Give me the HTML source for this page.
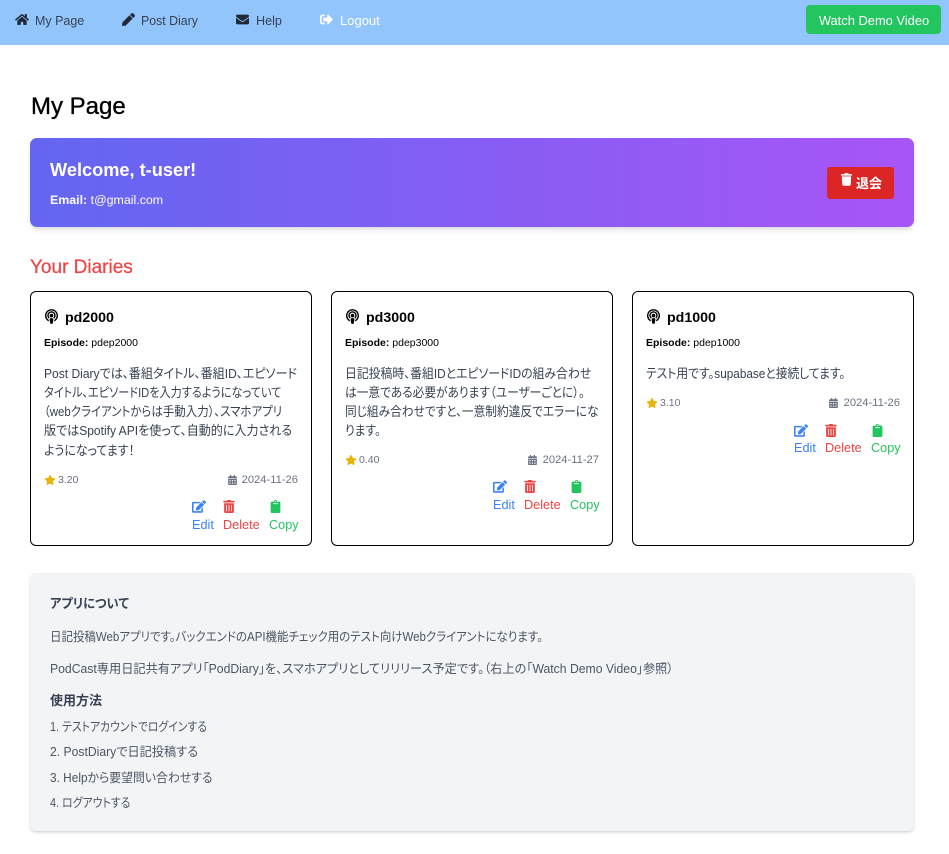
<!DOCTYPE html>
<html lang="ja"><head><meta charset="utf-8"><title>My Page</title>
<style>
*{box-sizing:border-box}
html,body{margin:0;padding:0;background:#fff;width:949px;height:854px;overflow:hidden}
body{position:relative;font-family:"Liberation Sans","Noto Sans CJK JP",sans-serif;font-feature-settings:"palt";color:#374151}
.t{position:absolute;white-space:nowrap;line-height:20px;height:20px;margin:0;font-weight:400;transform-origin:0 50%}
.c{transform:translateX(-50%)}
.r{transform:translateX(-100%)}
svg{position:absolute;display:block;fill:currentColor}
.box{position:absolute}
.card{position:absolute;top:291px;width:282px;height:255px;border:1px solid #000;border-radius:6px;background:#fff}
.ttl{font-size:14.2px;font-weight:700;color:#000}
.ep{font-size:10.5px;color:#000}
.body{font-size:13px;color:#374151}
.rate{font-size:10.5px;color:#6b7280}
.date{font-size:11.2px;color:#6b7280}
.lb{font-size:12.7px}
.nav{font-size:13px;color:#374151}
.ab{font-size:12.5px;color:#4b5563}
.abb{font-size:13px;font-weight:700;color:#374151}
</style></head><body>
<svg width="0" height="0" style="position:absolute">
<symbol id="i-pod" viewBox="0 0 448 512"><path d="M267.429 488.563C262.286 507.573 242.858 512 224 512c-18.857 0-38.286-4.427-43.428-23.437C172.927 460.134 160 388.898 160 355.75c0-35.156 31.142-43.75 64-43.75s64 8.594 64 43.75c0 32.949-12.871 104.179-20.571 132.813zM156.867 288.554c-18.693-18.308-29.958-44.173-28.784-72.599 2.054-49.724 42.395-89.956 92.124-91.881C274.862 121.958 320 165.807 320 220c0 26.827-11.064 51.116-28.866 68.552-2.675 2.62-2.401 6.986.628 9.187 9.312 6.765 16.46 15.343 21.234 25.363 1.741 3.654 6.497 4.66 9.449 1.891 28.826-27.043 46.553-65.783 45.511-108.565-1.855-76.206-63.595-138.208-139.793-140.369C146.869 73.753 80 139.215 80 220c0 41.361 17.532 78.7 45.55 104.989 2.953 2.771 7.711 1.77 9.453-1.887 4.774-10.021 11.923-18.598 21.235-25.363 3.029-2.2 3.304-6.566.629-9.185zM224 0C100.204 0 0 100.185 0 224c0 89.992 52.602 165.647 125.739 201.408 4.333 2.118 9.267-1.544 8.535-6.31-2.382-15.512-4.342-30.946-5.406-44.339-.146-1.836-1.149-3.486-2.678-4.512-47.4-31.806-78.564-86.016-78.187-147.347.592-96.237 79.29-174.648 175.529-174.899C320.793 47.747 400 126.797 400 224c0 61.932-32.158 116.49-80.65 147.867-.999 14.037-3.069 30.588-5.624 46.23-.731 4.767 4.203 8.429 8.535 6.31C395.227 389.727 448 314.187 448 224 448 100.205 347.815 0 224 0zM224 160c-35.346 0-64 28.654-64 64s28.654 64 64 64 64-28.654 64-64-28.654-64-64-64z"/></symbol>
<symbol id="i-star" viewBox="0 0 576 512"><path d="M259.3 17.8L194 150.2 47.9 171.5c-26.2 3.8-36.7 36.1-17.7 54.6l105.7 103-25 145.5c-4.5 26.3 23.2 46 46.4 33.7L288 439.6l130.7 68.7c23.2 12.2 50.9-7.4 46.4-33.7l-25-145.5 105.7-103c19-18.5 8.5-50.8-17.7-54.6L382 150.2 316.7 17.8c-11.7-23.6-45.6-23.9-57.4 0z"/></symbol>
<symbol id="i-cal" viewBox="0 0 448 512"><path d="M0 464c0 26.5 21.5 48 48 48h352c26.5 0 48-21.5 48-48V192H0v272zm320-196c0-6.6 5.4-12 12-12h40c6.6 0 12 5.4 12 12v40c0 6.6-5.4 12-12 12h-40c-6.6 0-12-5.4-12-12v-40zm0 128c0-6.6 5.4-12 12-12h40c6.6 0 12 5.4 12 12v40c0 6.6-5.4 12-12 12h-40c-6.6 0-12-5.4-12-12v-40zM192 268c0-6.6 5.4-12 12-12h40c6.6 0 12 5.4 12 12v40c0 6.6-5.4 12-12 12h-40c-6.6 0-12-5.4-12-12v-40zm0 128c0-6.6 5.4-12 12-12h40c6.6 0 12 5.4 12 12v40c0 6.6-5.4 12-12 12h-40c-6.6 0-12-5.4-12-12v-40zM64 268c0-6.6 5.4-12 12-12h40c6.6 0 12 5.4 12 12v40c0 6.6-5.4 12-12 12H76c-6.6 0-12-5.4-12-12v-40zm0 128c0-6.6 5.4-12 12-12h40c6.6 0 12 5.4 12 12v40c0 6.6-5.4 12-12 12H76c-6.6 0-12-5.4-12-12v-40zM400 64h-48V16c0-8.8-7.2-16-16-16h-32c-8.8 0-16 7.2-16 16v48H160V16c0-8.8-7.2-16-16-16h-32c-8.8 0-16 7.2-16 16v48H48C21.5 64 0 85.5 0 112v48h448v-48c0-26.5-21.5-48-48-48z"/></symbol>
<symbol id="i-edit" viewBox="0 0 576 512"><path d="M402.6 83.2l90.2 90.2c3.8 3.8 3.8 10 0 13.8L274.4 405.6l-92.8 10.3c-12.4 1.4-22.9-9.1-21.5-21.5l10.3-92.8L388.8 83.2c3.8-3.8 10-3.8 13.8 0zm162-22.9l-48.8-48.8c-15.2-15.2-39.9-15.2-55.2 0l-35.4 35.4c-3.8 3.8-3.8 10 0 13.8l90.2 90.2c3.8 3.8 10 3.8 13.8 0l35.4-35.4c15.2-15.3 15.2-40 0-55.2zM384 346.2V448H64V128h229.8c3.2 0 6.2-1.3 8.5-3.5l40-40c7.6-7.6 2.2-20.5-8.5-20.5H48C21.5 64 0 85.5 0 112v352c0 26.5 21.5 48 48 48h352c26.5 0 48-21.5 48-48V306.2c0-10.7-12.9-16-20.5-8.5l-40 40c-2.2 2.3-3.5 5.3-3.5 8.5z"/></symbol>
<symbol id="i-del" viewBox="0 0 448 512"><path d="M32 464a48 48 0 0 0 48 48h288a48 48 0 0 0 48-48V128H32zm272-256a16 16 0 0 1 32 0v224a16 16 0 0 1-32 0zm-96 0a16 16 0 0 1 32 0v224a16 16 0 0 1-32 0zm-96 0a16 16 0 0 1 32 0v224a16 16 0 0 1-32 0zM432 32H312l-9.4-18.7A24 24 0 0 0 281.1 0H166.8a23.72 23.72 0 0 0-21.4 13.3L136 32H16A16 16 0 0 0 0 48v32a16 16 0 0 0 16 16h416a16 16 0 0 0 16-16V48a16 16 0 0 0-16-16z"/></symbol>
<symbol id="i-clip" viewBox="0 0 384 512"><path d="M384 112v352c0 26.51-21.49 48-48 48H48c-26.51 0-48-21.49-48-48V112c0-26.51 21.49-48 48-48h80c0-35.29 28.71-64 64-64s64 28.71 64 64h80c26.51 0 48 21.49 48 48zM192 40c-13.255 0-24 10.745-24 24s10.745 24 24 24 24-10.745 24-24-10.745-24-24-24m96 114v-20a6 6 0 0 0-6-6H102a6 6 0 0 0-6 6v20a6 6 0 0 0 6 6h180a6 6 0 0 0 6-6z"/></symbol>
</svg>

<div class="box" style="left:0;top:0;width:949px;height:45px;background:#93c5fd"></div>
<svg style="left:15px;top:13px;color:#1f2937" width="14" height="13" viewBox="0 0 576 512"><path d="M280.37 148.26L96 300.11V464a16 16 0 0 0 16 16l112.06-.29a16 16 0 0 0 15.92-16V368a16 16 0 0 1 16-16h64a16 16 0 0 1 16 16v95.64a16 16 0 0 0 16 16.05L464 480a16 16 0 0 0 16-16V300L295.67 148.26a12.19 12.19 0 0 0-15.3 0zM571.6 251.47L488 182.56V44.05a12 12 0 0 0-12-12h-56a12 12 0 0 0-12 12v72.61L318.47 43a48 48 0 0 0-61 0L4.34 251.47a12 12 0 0 0-1.6 16.9l25.5 31A12 12 0 0 0 45.15 301l235.22-193.74a12.19 12.19 0 0 1 15.3 0L530.9 301a12 12 0 0 0 16.9-1.6l25.5-31a12 12 0 0 0-1.7-16.93z"/></svg>
<div class="t nav" style="left:35px;top:11px;transform:scaleX(.96)">My Page</div>
<svg style="left:122px;top:13px;color:#1f2937" width="13" height="13" viewBox="0 0 512 512"><path d="M497.9 142.1l-46.1 46.1c-4.7 4.7-12.3 4.7-17 0l-111-111c-4.7-4.7-4.7-12.3 0-17l46.1-46.1c18.7-18.7 49.1-18.7 67.9 0l60.1 60.1c18.8 18.7 18.8 49.1 0 67.9zM284.2 99.8L21.6 362.4.4 483.9c-2.9 16.4 11.4 30.6 27.8 27.8l121.5-21.3 262.6-262.6c4.7-4.7 4.7-12.3 0-17l-111-111c-4.8-4.7-12.4-4.7-17.1 0z"/></svg>
<div class="t nav" style="left:141px;top:11px;transform:scaleX(.95)">Post Diary</div>
<svg style="left:236px;top:13px;color:#1f2937" width="13" height="13" viewBox="0 0 512 512"><path d="M502.3 190.8c3.9-3.1 9.7-.2 9.7 4.7V400c0 26.5-21.5 48-48 48H48c-26.5 0-48-21.5-48-48V195.6c0-5 5.7-7.8 9.7-4.7 22.4 17.4 52.1 39.5 154.1 113.6 21.1 15.4 56.7 47.8 92.2 47.6 35.7.3 72-32.8 92.3-47.6 102-74.1 131.6-96.3 154-113.7zM256 320c23.2.4 56.6-29.2 73.4-41.4 132.7-96.3 142.8-104.7 173.4-128.7 5.8-4.5 9.2-11.5 9.2-18.9v-19c0-26.5-21.5-48-48-48H48C21.5 64 0 85.5 0 112v19c0 7.4 3.4 14.3 9.2 18.9 30.6 23.9 40.7 32.4 173.4 128.7 16.8 12.2 50.2 41.8 73.4 41.4z"/></svg>
<div class="t nav" style="left:256px;top:11px;transform:scaleX(.97)">Help</div>
<svg style="left:320px;top:13px;color:#fff" width="13" height="13" viewBox="0 0 512 512"><path d="M497 273L329 441c-15 15-41 4.5-41-17v-96H152c-13.3 0-24-10.7-24-24v-96c0-13.3 10.7-24 24-24h136V88c0-21.4 25.9-32 41-17l168 168c9.3 9.4 9.3 24.6 0 34zM192 436v-40c0-6.6-5.4-12-12-12H96c-17.7 0-32-14.3-32-32V160c0-17.7 14.3-32 32-32h84c6.6 0 12-5.4 12-12V76c0-6.6-5.4-12-12-12H96c-53 0-96 43-96 96v192c0 53 43 96 96 96h84c6.6 0 12-5.4 12-12z"/></svg>
<div class="t nav" style="left:340px;top:11px;color:#fff">Logout</div>
<div class="box" style="left:806px;top:5px;width:135px;height:29px;background:#22c55e;border-radius:4px"></div>
<div class="t c" style="left:874px;top:11px;font-size:12.9px;color:#fff">Watch Demo Video</div>

<h1 class="t" style="left:31px;top:92px;height:30px;line-height:30px;font-size:24px;color:#000;-webkit-text-stroke:.35px #000">My Page</h1>

<div class="box" style="left:30px;top:138px;width:884px;height:89px;border-radius:7px;background:linear-gradient(90deg,#6366f1,#a855f7);box-shadow:0 4px 6px -1px rgba(0,0,0,.1),0 2px 4px -2px rgba(0,0,0,.1)"></div>
<div class="t" style="left:50px;top:160px;font-size:18.2px;font-weight:700;color:#fff">Welcome, t-user!</div>
<div class="t" style="left:50px;top:190px;font-size:12.4px;color:#fff"><b>Email:</b> t@gmail.com</div>
<div class="box" style="left:827px;top:167px;width:67px;height:32px;background:#dc2626;border-radius:3px"></div>
<svg style="left:841px;top:173px;color:#fff" width="11" height="13" viewBox="0 0 448 512"><path d="M432 32H312l-9.4-18.7A24 24 0 0 0 281.1 0H166.8a23.72 23.72 0 0 0-21.4 13.3L136 32H16A16 16 0 0 0 0 48v32a16 16 0 0 0 16 16h416a16 16 0 0 0 16-16V48a16 16 0 0 0-16-16zM53.2 467a48 48 0 0 0 47.9 45h245.8a48 48 0 0 0 47.9-45L416 128H32z"/></svg>
<div class="t" style="left:856px;top:174px;font-size:13px;font-weight:700;color:#fff">退会</div>

<h2 class="t" style="left:30px;top:258px;font-size:19px;color:#ef4444;-webkit-text-stroke:.25px #ef4444">Your Diaries</h2>

<!-- Card 1 -->
<div class="card" style="left:30px"></div>
<svg style="left:45px;top:309px;color:#000" width="13" height="15"><use href="#i-pod"/></svg>
<div class="t ttl" style="left:65px;top:308px">pd2000</div>
<div class="t ep" style="left:44px;top:333px"><b>Episode:</b> pdep2000</div>
<div class="t body" style="left:44px;top:364px;transform:scaleX(.927)">Post Diaryでは、番組タイトル、番組ID、エピソード</div>
<div class="t body" style="left:44px;top:383px;transform:scaleX(.856)">タイトル、エピソードIDを入力するようになっていて</div>
<div class="t body" style="left:44px;top:402px;transform:scaleX(.882)">（webクライアントからは手動入力）、スマホアプリ</div>
<div class="t body" style="left:44px;top:421px;transform:scaleX(.926)">版ではSpotify APIを使って、自動的に入力される</div>
<div class="t body" style="left:44px;top:441px;transform:scaleX(.917)">ようになってます！</div>
<svg style="left:44px;top:475px;color:#eab308" width="12" height="10"><use href="#i-star"/></svg>
<div class="t rate" style="left:58px;top:470px">3.20</div>
<svg style="left:228px;top:475px;color:#6b7280" width="9" height="10"><use href="#i-cal"/></svg>
<div class="t date r" style="left:298px;top:470px">2024-11-26</div>
<svg style="left:192px;top:500px;color:#3b82f6" width="14" height="13"><use href="#i-edit"/></svg>
<svg style="left:223px;top:500px;color:#ef4444" width="12" height="13"><use href="#i-del"/></svg>
<svg style="left:270px;top:500px;color:#22c55e" width="11" height="13"><use href="#i-clip"/></svg>
<div class="t lb" style="left:192px;top:515px;color:#3b82f6">Edit</div>
<div class="t lb" style="left:223px;top:515px;color:#ef4444">Delete</div>
<div class="t lb" style="left:269px;top:515px;color:#22c55e">Copy</div>

<!-- Card 2 -->
<div class="card" style="left:331px"></div>
<svg style="left:346px;top:309px;color:#000" width="13" height="15"><use href="#i-pod"/></svg>
<div class="t ttl" style="left:366px;top:308px">pd3000</div>
<div class="t ep" style="left:345px;top:333px"><b>Episode:</b> pdep3000</div>
<div class="t body" style="left:345px;top:364px;transform:scaleX(.911)">日記投稿時、番組IDとエピソードIDの組み合わせ</div>
<div class="t body" style="left:345px;top:383px;transform:scaleX(.90)">は一意である必要があります（ユーザーごとに）。</div>
<div class="t body" style="left:345px;top:402px;transform:scaleX(.90)">同じ組み合わせですと、一意制約違反でエラーにな</div>
<div class="t body" style="left:345px;top:421px;transform:scaleX(.90)">ります。</div>
<svg style="left:345px;top:455px;color:#eab308" width="12" height="10"><use href="#i-star"/></svg>
<div class="t rate" style="left:359px;top:450px">0.40</div>
<svg style="left:528px;top:455px;color:#6b7280" width="9" height="10"><use href="#i-cal"/></svg>
<div class="t date r" style="left:599px;top:450px">2024-11-27</div>
<svg style="left:493px;top:480px;color:#3b82f6" width="14" height="13"><use href="#i-edit"/></svg>
<svg style="left:524px;top:480px;color:#ef4444" width="12" height="13"><use href="#i-del"/></svg>
<svg style="left:571px;top:480px;color:#22c55e" width="11" height="13"><use href="#i-clip"/></svg>
<div class="t lb" style="left:493px;top:495px;color:#3b82f6">Edit</div>
<div class="t lb" style="left:524px;top:495px;color:#ef4444">Delete</div>
<div class="t lb" style="left:570px;top:495px;color:#22c55e">Copy</div>

<!-- Card 3 -->
<div class="card" style="left:632px"></div>
<svg style="left:647px;top:309px;color:#000" width="13" height="15"><use href="#i-pod"/></svg>
<div class="t ttl" style="left:667px;top:308px">pd1000</div>
<div class="t ep" style="left:646px;top:333px"><b>Episode:</b> pdep1000</div>
<div class="t body" style="left:646px;top:364px;transform:scaleX(.905)">テスト用です。supabaseと接続してます。</div>
<svg style="left:646px;top:398px;color:#eab308" width="12" height="10"><use href="#i-star"/></svg>
<div class="t rate" style="left:660px;top:393px">3.10</div>
<svg style="left:829px;top:398px;color:#6b7280" width="9" height="10"><use href="#i-cal"/></svg>
<div class="t date r" style="left:900px;top:393px">2024-11-26</div>
<svg style="left:794px;top:424px;color:#3b82f6" width="14" height="13"><use href="#i-edit"/></svg>
<svg style="left:825px;top:424px;color:#ef4444" width="12" height="13"><use href="#i-del"/></svg>
<svg style="left:872px;top:424px;color:#22c55e" width="11" height="13"><use href="#i-clip"/></svg>
<div class="t lb" style="left:794px;top:438px;color:#3b82f6">Edit</div>
<div class="t lb" style="left:825px;top:438px;color:#ef4444">Delete</div>
<div class="t lb" style="left:871px;top:438px;color:#22c55e">Copy</div>

<!-- About -->
<div class="box" style="left:30px;top:573px;width:884px;height:258px;background:#f3f4f6;border-radius:6px;box-shadow:0 2px 4px -1px rgba(0,0,0,.15),0 1px 2px rgba(0,0,0,.08)"></div>
<div class="t abb" style="left:50px;top:594px;transform:scaleX(.94)">アプリについて</div>
<div class="t ab" style="left:50px;top:627px;transform:scaleX(.918)">日記投稿Webアプリです。バックエンドのAPI機能チェック用のテスト向けWebクライアントになります。</div>
<div class="t ab" style="left:50px;top:659px;transform:scaleX(.976)">PodCast専用日記共有アプリ「PodDiary」を、スマホアプリとしてリリリース予定です。（右上の「Watch Demo Video」参照）</div>
<div class="t abb" style="left:50px;top:691px">使用方法</div>
<div class="t ab" style="left:50px;top:717px;transform:scaleX(.867)">1. テストアカウントでログインする</div>
<div class="t ab" style="left:50px;top:742px;transform:scaleX(.973)">2. PostDiaryで日記投稿する</div>
<div class="t ab" style="left:50px;top:768px;transform:scaleX(.948)">3. Helpから要望問い合わせする</div>
<div class="t ab" style="left:50px;top:793px;transform:scaleX(.87)">4. ログアウトする</div>
</body></html>
